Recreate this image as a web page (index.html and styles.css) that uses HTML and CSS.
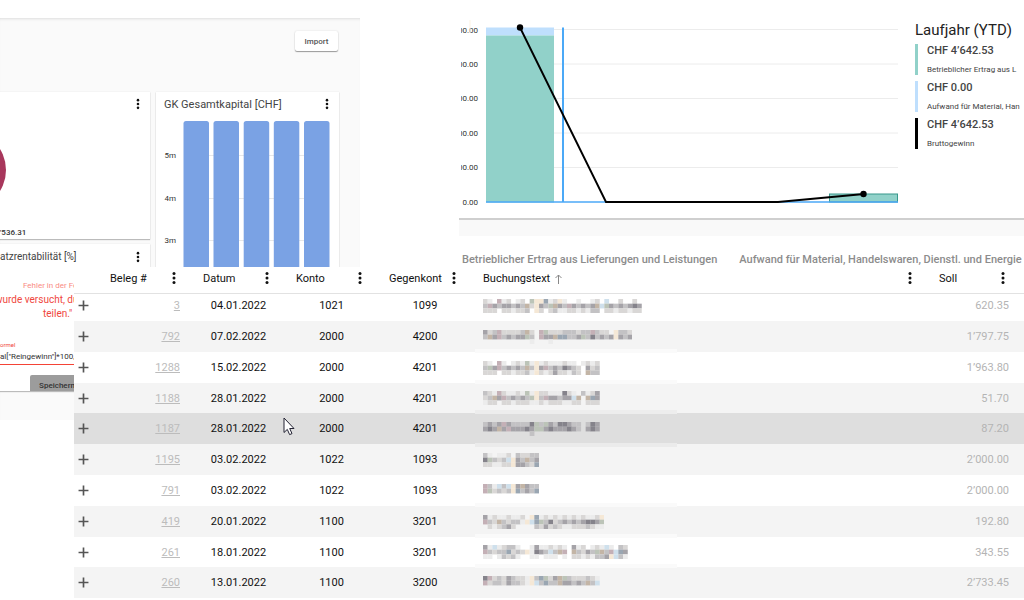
FILE: index.html
```html
<!DOCTYPE html>
<html lang="de">
<head>
<meta charset="utf-8">
<title>Laufjahr (YTD)</title>
<link rel="stylesheet" href="styles.css">
</head>
<body>
<svg class="defs" aria-hidden="true">
  <symbol id="kebab" viewBox="0 0 4 14"><circle cx="2" cy="2.5" r="1.5"/><circle cx="2" cy="7" r="1.5"/><circle cx="2" cy="11.5" r="1.5"/></symbol>
  <symbol id="plus" viewBox="0 0 10 10"><path d="M5 0.5V9.5M0.5 5H9.5" stroke="#555" stroke-width="1.5" fill="none"/></symbol>
</svg>
<div class="board">
  <section class="dashboard">
    <div class="toolbar"><button class="import">Import</button></div>
    <div class="cards">
      <div class="stack">
        <article class="card card-donut">
          <header><h3></h3><button class="menu" aria-label="Menü"><svg><use href="#kebab"/></svg></button></header>
          <svg class="donut" viewBox="0 0 20 80"><circle cx="-34" cy="40" r="40" fill="#a8375c"/></svg>
          <p class="sum">'536.31</p>
        </article>
        <article class="card card-formula">
          <header><h3>atzrentabilität [%]</h3><button class="menu" aria-label="Menü"><svg><use href="#kebab"/></svg></button></header>
          <p class="error-head">Fehler in der Fo</p>
          <p class="error-text error-cut">wurde versucht, du</p>
          <p class="error-text error-end">teilen."</p>
          <label class="field-label" for="formula">ormel</label>
          <input id="formula" class="formula" value='al["Reingewinn"]*100,'>
          <button class="save">Speichern</button>
        </article>
      </div>
      <article class="card card-bars">
        <header><h3>GK Gesamtkapital [CHF]</h3><button class="menu" aria-label="Menü"><svg><use href="#kebab"/></svg></button></header>
        <svg class="bars" viewBox="0 0 183 180">
          <g stroke="#e8e8e8"><path d="M28 39.5H173M28 82.5H173M28 124.5H173"/></g>
          <g fill="#7aa2e4">
            <rect x="27.500" y="5" width="25.500" height="190" rx="2.500"/><rect x="57.500" y="5" width="25.500" height="190" rx="2.500"/><rect x="87.700" y="5" width="25.500" height="190" rx="2.500"/><rect x="117.800" y="5" width="25.500" height="190" rx="2.500"/><rect x="148" y="5" width="25.500" height="190" rx="2.500"/>
          </g>
          <g class="axis" text-anchor="end"><text x="20" y="42">5m</text><text x="20" y="85">4m</text><text x="20" y="127">3m</text></g>
        </svg>
      </article>
    </div>
  </section>

  <section class="report">
    <div class="overview">
      <svg class="chart" viewBox="0 0 439 218">
        <g stroke="#ececec"><path d="M27 29.500H439M27 64H439M27 98.500H439M27 133H439M27 167.500H439"/></g>
        <g class="axis" text-anchor="end"><text x="19" y="33">00.00</text><text x="19" y="67">00.00</text><text x="19" y="101">00.00</text><text x="19" y="136">00.00</text><text x="19" y="170">00.00</text><text x="19" y="205">0.00</text></g>
        <rect class="axis-clip" x="0" y="20" width="2" height="160"/>
        <path d="M11 20V33" stroke="#fdf3e3" stroke-width="1"/>
        <rect x="27" y="27.500" width="68" height="8" fill="#bfdffd"/>
        <rect x="27" y="35.500" width="68" height="167" fill="#91d1c9"/>
        <path d="M104 27.500V202" stroke="#4ba9f7" stroke-width="2"/>
        <rect x="370.500" y="194" width="68" height="8" fill="#91d1c9" stroke="#38988c"/>
        <path d="M27 202H439" stroke="#4ba9f7" stroke-width="1.700"/>
        <path d="M61 27.500L147 202H319L405 194" fill="none" stroke="#000" stroke-width="1.900"/>
        <circle cx="61" cy="27.500" r="3.200"/><circle cx="404.500" cy="194" r="3.200"/>
      </svg>
      <aside class="legend">
        <h2>Laufjahr (YTD)</h2>
        <dl>
          <div class="entry teal"><dt>CHF 4’642.53</dt><dd>Betrieblicher Ertrag aus L</dd></div>
          <div class="entry sky"><dt>CHF 0.00</dt><dd>Aufwand für Material, Han</dd></div>
          <div class="entry black"><dt>CHF 4’642.53</dt><dd>Bruttogewinn</dd></div>
        </dl>
      </aside>
    </div>
    <nav class="tabs"><a href="#ertrag">Betrieblicher Ertrag aus Lieferungen und Leistungen</a><a href="#aufwand">Aufwand für Material, Handelswaren, Dienstl. und Energie</a></nav>
  </section>

  <section class="ledger">
    <table>
      <colgroup><col class="c-plus"><col class="c-std"><col class="c-std"><col class="c-std"><col class="c-gegen"><col><col class="c-soll"></colgroup>
      <thead><tr id="head"><th></th></tr></thead>
      <tbody id="rows"></tbody>
    </table>
  </section>
  <svg class="cursor" viewBox="0 0 12 19"><path d="M1 1V15.500L4.300 12.400L6.600 17.600L9 16.600L6.700 11.500H11Z" fill="#fff" stroke="#223" stroke-width="1"/></svg>
</div>
<script src="app.js"></script>
</body>
</html>
```
FILE: styles.css
```css
* { box-sizing: border-box; }
body { margin: 0; background: #fff; font-family: Roboto, "Liberation Sans", sans-serif; font-size: 12px; color: #333; }
h2, h3, p, dl, dd { margin: 0; font-weight: 400; }
button { border: 0; padding: 0; background: none; font: inherit; color: inherit; }
.defs { position: absolute; width: 0; height: 0; }
.board { position: relative; min-height: 100vh; overflow: hidden; display: grid; grid-template-columns: 360px minmax(0, 1fr); column-gap: 99px; align-items: start; }

.dashboard { margin-top: 18px; padding: 13px 0 29px; background: #fafafa; box-shadow: inset 0 3px 3px -2px #ddd; overflow: hidden; }
.toolbar { display: flex; justify-content: flex-end; padding-right: 22px; margin-bottom: 41px; }
.import { width: 43px; height: 20px; background: #fff; border-radius: 2px; box-shadow: 0 1px 1px #999, 0 0 2px #ddd; font-size: 8px; font-weight: 500; color: #555; }
.cards { display: grid; grid-template-columns: 150px 183px; gap: 6px; }
.stack { display: grid; gap: 5px; }
.card { background: #fff; box-shadow: 0 1px 1px #bbb, 0 0 1px #ddd; overflow: hidden; height: 147px; }
.card-bars { height: auto; }
.card header { display: flex; justify-content: space-between; align-items: center; height: 24px; padding-right: 10px; }
.card h3 { font-size: 11px; white-space: nowrap; color: #444; }
.card-bars header { padding-left: 8px; }
.menu { display: flex; }
.menu svg { width: 4px; height: 12px; fill: #111; }
.bars { display: block; width: 183px; height: 180px; }
.donut { display: block; width: 20px; height: 80px; margin: 14px 0 17px; }
.sum { font-size: 8px; line-height: 12px; font-weight: 500; }
.axis text { font-size: 8px; fill: #333; }
.axis-clip { fill: #fff; }
.card-formula header { height: 25px; }
.card-formula h3 { font-size: 10px; }
.error-head { padding: 10px 0 0 23px; font-size: 8px; line-height: 14px; color: #f98b84; white-space: nowrap; }
.error-text { font-size: 10px; line-height: 14px; color: #f0473e; white-space: nowrap; }
.error-cut { margin-left: -5px; }
.error-end { padding-left: 43px; }
.field-label { display: block; margin-top: 20px; font-size: 6px; line-height: 8px; color: #f0473e; }
.formula { display: block; width: 100%; height: 16px; border: 0; border-bottom: 1px solid #f44336; padding: 0; background: none; font: 8px Roboto, sans-serif; color: #333; }
.save { display: block; margin: 10px 0 0 30px; width: 54px; height: 20px; background: #9c9c9c; border-radius: 2px; font-size: 8px; font-weight: 500; color: #333; }

.overview { display: flex; gap: 17px; border-bottom: 2px solid #cfcfcf; }
.chart { flex: 1; min-width: 0; display: block; }
.legend { width: 109px; overflow: hidden; white-space: nowrap; padding-top: 20px; }
.legend h2 { font-size: 15px; line-height: 20px; margin-bottom: 4px; color: #222; }
.legend dl { display: grid; gap: 6px; }
.entry { border-left: 3px solid; padding-left: 9px; height: 31px; }
.teal { border-color: #91d1c9; }
.sky { border-color: #bfdffd; }
.black { border-color: #000; }
.entry dt { font-size: 11px; line-height: 13px; font-weight: 500; color: #444; }
.entry dd { font-size: 8px; line-height: 12px; margin-top: 7px; color: #444; }
.tabs { display: flex; gap: 22px; padding-left: 3px; border-top: 16px solid #f9f9f9; white-space: nowrap; overflow: hidden; }
.tabs a { font-size: 11px; line-height: 15px; padding: 16px 0 8px; font-weight: 500; color: #8c8c8c; text-decoration: none; }

.ledger { position: absolute; left: 74px; right: 0; top: 267px; background: #fff; }
.ledger table { width: 100%; table-layout: fixed; border-collapse: separate; border-spacing: 0; font-size: 11px; color: #111; }
.c-plus { width: 25px; }
.c-std { width: 93px; }
.c-gegen { width: 94px; }
.c-soll { width: 96px; }
.ledger th { height: 27px; padding: 0 6px 4px 11px; border-bottom: 1px solid #e2e2e2; font-weight: 400; text-align: left; }
.ledger th:last-child { padding-right: 9px; }
.head { display: flex; align-items: center; }
.label { flex: 1; min-width: 0; overflow: hidden; white-space: nowrap; }
.sort { display: inline-block; width: 7px; height: 10px; margin-left: 2px; vertical-align: -2px; fill: none; stroke: #888; }
.head .menu { width: 24px; justify-content: center; }
.head .menu svg { height: 14px; }
.ledger td { height: 31px; padding: 0 11px; text-align: center; }
.ledger tr:nth-child(5n+4) td { height: 30px; }
.ledger tbody tr:first-child td { height: 27px; padding-bottom: 4px; }
.ledger tbody tr:nth-child(even) { background: #f4f4f4; }
.ledger tbody tr.hover { background: #dedede; }
.ledger td.expand { padding-left: 4px; padding-right: 0; text-align: left; }
.expand button { display: block; }
.expand svg { display: block; width: 11px; height: 11px; }
.ledger td.num { text-align: right; color: #bcbcbc; padding-right: 12px; }
.ledger td.soll { text-align: right; color: #b4b4b4; padding-right: 15px; }
.num a { color: inherit; }
.ledger td.text { text-align: left; position: relative; }
.mosaic { display: block; height: 14px; }
.strip::after { content: ""; position: absolute; left: 3px; bottom: -1px; width: 202px; height: 4px; background: #fafafa; }
tr:nth-child(4) .strip::after { background: #ededed; }
.hover .strip::after { background: #ebebeb; bottom: -3px; }
.cursor { position: absolute; left: 283px; top: 417px; width: 12px; height: 19px; }
```
FILE: app.js
```js
const tones = { a: '#ececec', b: '#d9d7d6', c: '#c3c2c4', d: '#a5a3a8', e: '#85838b', p: '#c4b0b6', g: '#bcc4b8', t: '#c3b5a6', w: '#f5e8d6', u: '#cfe0ec', s: '#9aa6b2' };
const columns = ['Beleg #', 'Datum', 'Konto', 'Gegenkonto', 'Buchungstext', 'Soll'];
const entries = [
  ['3', '04.01.2022', '1021', '1099', '620.35', ['ba.pab.ab.gwwsabwa..a..ab.u..b..b.', 'cpdcddcdctbwdcgtdcpdcdcdtugdcdcded', 'bbb.bbabbc.wb.bcaabbabacc.bbabbabb']],
  ['792', '07.02.2022', '2000', '4200', '1’797.75', ['dbcpbbbbctb.pgbbbcccbccpcbb.wccb', 'ctdpcdcddgc.pddtssccdgcecdcdwdcd', '..........a...a.................']],
  ['1288', '15.02.2022', '2000', '4201', '1’963.80', ['ba.pa.abagawabaaabaa.abab', 'cgdpcdcdctcwdpcdcedcb.dbc', 'bbb.bbabbcawbabdbbacb.tcc']],
  ['1188', '28.01.2022', '2000', '4201', '51.70', ['cbapbaabagawbbaaaeba.cabd', 'bctdpcdcdcgwcpddcddut.tsd', 'abb.bbabbbaababbbaabb.bbb']],
  ['1187', '28.01.2022', '2000', '4201', '87.20', ['cdcdpdccccegcgdceedcc.ced', 'dedtdpdddedggdedddedc.ded', '..........c..............']],
  ['1195', '03.02.2022', '1022', '1093', '2’000.00', ['ca.aab.cbbcc', 'egcbcuwdctcd', 'bbaabbwddcbs']],
  ['791', '03.02.2022', '1022', '1093', '2’000.00', ['pcaucuwdtdcc', 'pgbcbcwscdcs', '............']],
  ['419', '20.01.2022', '1100', '3201', '192.80', ['dabaabaab.wsabababababaabw', 'pcbtcbccawusgcebcdcdcdeedg', '.babcdb....cbdbcbaabbbcbaa']],
  ['261', '18.01.2022', '1100', '3201', '343.55', ['dauabcca..adaababa.dab.abaua.cb', 'pcbccsbcbwaedcuctp.tcbdcgtcpusd', 'aa.acbca..aa.aaa.a.bbabaccdwuca']],
  ['260', '13.01.2022', '1100', '3200', '2’733.45', ['epbcbdcbbawcsgbdtgcbbbcba', 'pbccbdccbawucscctddcdctcu', '.........................']]
];
const stripRows = [1, 2, 3, 4, 6, 7, 8];
const kebab = '<button class="menu" aria-label="Spaltenmenü"><svg><use href="#kebab"/></svg></button>';
const arrow = '<svg class="sort" viewBox="0 0 7 10"><path d="M3.500 10V1M0.500 4L3.500 1L6.500 4"/></svg>';

document.getElementById('head').innerHTML += columns.map(name =>
  `<th><div class="head"><span class="label">${name}${name === 'Buchungstext' ? ' ' + arrow : ''}</span>${kebab}</div></th>`).join('');

function mosaic(lines) {
  const cols = lines[0].length;
  const cells = lines.map((line, y) => [...line].map((k, x) =>
    tones[k] ? `<rect x="${x}" y="${y}" width="1.020" height="1.020" fill="${tones[k]}"/>` : '').join('')).join('');
  return `<svg class="mosaic" viewBox="0 0 ${cols} 3" role="img" aria-label="Unkenntlich">${cells}</svg>`;
}

document.getElementById('rows').innerHTML = entries.map(([nr, date, konto, gegen, soll, lines], i) => `
  <tr class="${i === 4 ? 'hover' : ''}">
    <td class="expand"><button aria-label="Öffnen"><svg><use href="#plus"/></svg></button></td>
    <td class="num"><a href="#beleg-${nr}">${nr}</a></td><td>${date}</td><td>${konto}</td><td>${gegen}</td>
    <td class="text ${stripRows.includes(i) ? 'strip' : ''}">${mosaic(lines)}</td><td class="soll">${soll}</td>
  </tr>`).join('');
```
